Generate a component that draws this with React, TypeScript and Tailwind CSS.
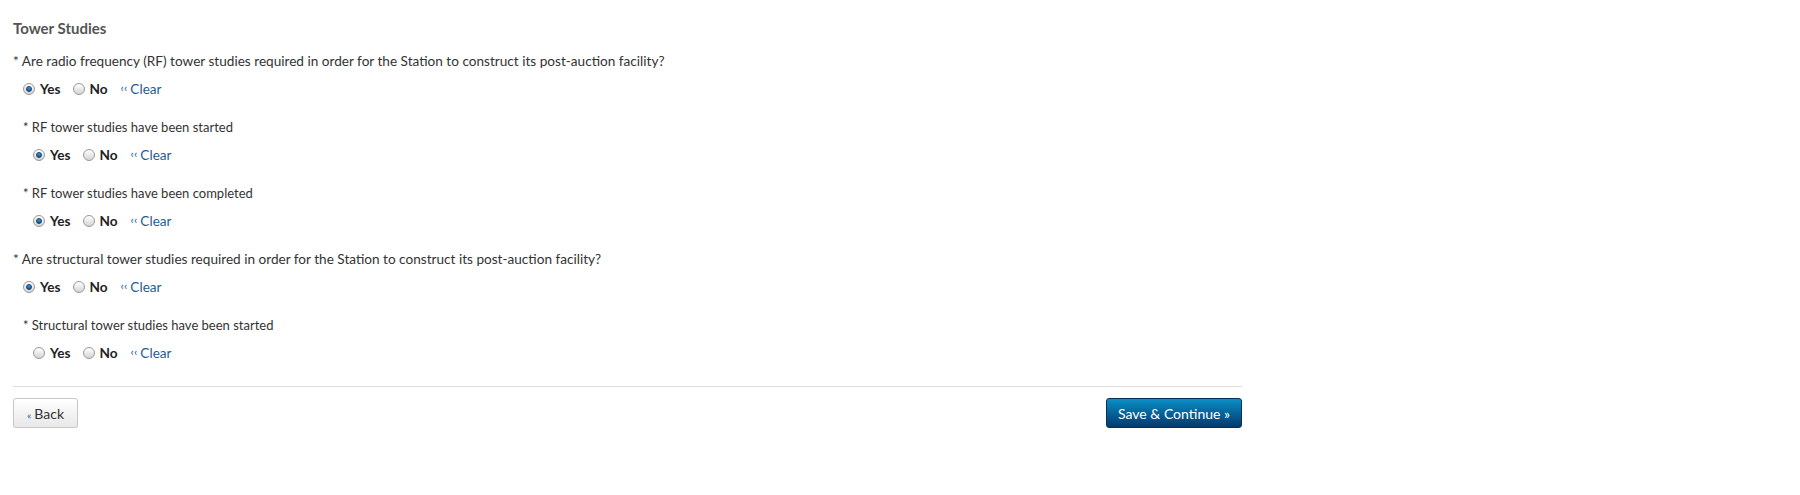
import React from "react";

type Choice = "yes" | "no" | null;

interface Question {
  label: string;
  value: Choice;
  sub?: boolean;
}

const questions: Question[] = [
  {
    label:
      "* Are radio frequency (RF) tower studies required in order for the Station to construct its post-auction facility?",
    value: "yes",
  },
  { label: "* RF tower studies have been started", value: "yes", sub: true },
  { label: "* RF tower studies have been completed", value: "yes", sub: true },
  {
    label:
      "* Are structural tower studies required in order for the Station to construct its post-auction facility?",
    value: "yes",
  },
  { label: "* Structural tower studies have been started", value: null, sub: true },
];

function Radio({ checked }: { checked: boolean }) {
  return (
    <span className="relative inline-flex h-[12px] w-[12px] shrink-0 items-center justify-center rounded-full border border-[#9a9a9a] bg-gradient-to-b from-[#ffffff] to-[#d4d4d4]">
      {checked && (
        <span className="h-[6px] w-[6px] rounded-full border border-[#0d3f6b] bg-gradient-to-b from-[#4a9ad4] to-[#15588f]" />
      )}
    </span>
  );
}

function RadioRow({ value }: { value: Choice }) {
  return (
    <div className="flex h-[20px] items-center text-[13.6px]">
      <label className="flex items-center">
        <Radio checked={value === "yes"} />
        <span className="ml-[5px] font-bold text-[#222]">Yes</span>
      </label>
      <label className="ml-[12px] flex items-center">
        <Radio checked={value === "no"} />
        <span className="ml-[5px] font-bold text-[#222]">No</span>
      </label>
      <a className="ml-[13px] flex items-center text-[#1f5d96]">
        <span className="mr-[3px] -translate-y-[1px] text-[12px]">‹‹</span>
        <span>Clear</span>
      </a>
    </div>
  );
}

export default function App() {
  return (
    <div className="w-[1242px] bg-white pl-[13px] pt-[18px] font-['Lato','Open_Sans',sans-serif] text-[#333]">
      <h3 className="text-[15px] font-bold leading-[20px] text-[#555]">Tower Studies</h3>

      <div className="mt-[13px] flex flex-col gap-[18px]">
        {questions.map((q) => (
          <div key={q.label} className={q.sub ? "pl-[10px]" : ""}>
            <div className={`leading-[20px] ${q.sub ? "text-[13px]" : "text-[13.6px]"}`}>{q.label}</div>
            <div className="mt-[8px] pl-[10px]">
              <RadioRow value={q.value} />
            </div>
          </div>
        ))}
      </div>

      <div className="mt-[23px] border-t border-[#dddddd]" />

      <div className="mt-[11px] flex items-center justify-between">
        <button
          type="button"
          className="h-[30px] rounded-[3px] border border-[#c8c8c8] bg-gradient-to-b from-[#ffffff] to-[#e8e8e8] px-[13px] text-[14px] text-[#333] shadow-[0_1px_1px_rgba(0,0,0,0.15)]"
        >
          <span className="mr-[3px] text-[10px] text-[#1f5d96]">«</span>Back
        </button>
        <button
          type="button"
          className="h-[30px] rounded-[3px] border border-[#033060] bg-gradient-to-b from-[#0b8fc6] to-[#043a6d] px-[11px] text-[14px] text-white"
        >
          Save &amp; Continue »
        </button>
      </div>
    </div>
  );
}
